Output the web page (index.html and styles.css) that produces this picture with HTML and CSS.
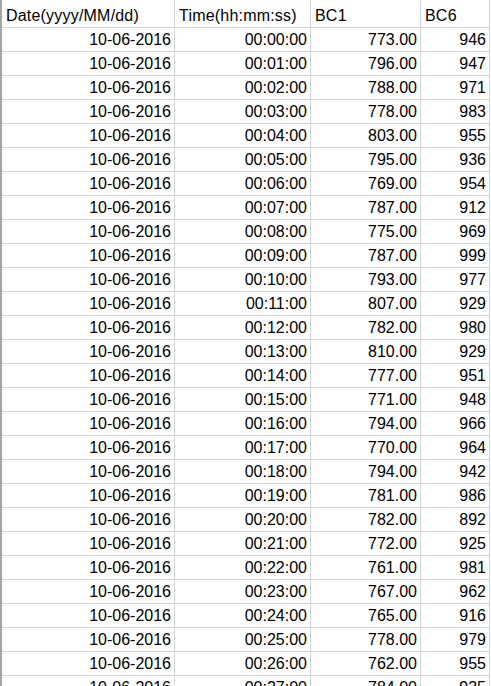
FILE: index.html
```html
<!DOCTYPE html>
<html>
<head>
<meta charset="utf-8">
<link rel="stylesheet" href="styles.css">
</head>
<body>
<div class="sheet">
<table class="grid">
<colgroup><col class="c1"><col class="c2"><col class="c3"><col class="c4"></colgroup>
<thead>
<tr class="head"><th>Date(yyyy/MM/dd)</th><th>Time(hh:mm:ss)</th><th>BC1</th><th>BC6</th></tr>
</thead>
<tbody>
<tr><td>10-06-2016</td><td>00:00:00</td><td>773.00</td><td>946</td></tr>
<tr><td>10-06-2016</td><td>00:01:00</td><td>796.00</td><td>947</td></tr>
<tr><td>10-06-2016</td><td>00:02:00</td><td>788.00</td><td>971</td></tr>
<tr><td>10-06-2016</td><td>00:03:00</td><td>778.00</td><td>983</td></tr>
<tr><td>10-06-2016</td><td>00:04:00</td><td>803.00</td><td>955</td></tr>
<tr><td>10-06-2016</td><td>00:05:00</td><td>795.00</td><td>936</td></tr>
<tr><td>10-06-2016</td><td>00:06:00</td><td>769.00</td><td>954</td></tr>
<tr><td>10-06-2016</td><td>00:07:00</td><td>787.00</td><td>912</td></tr>
<tr><td>10-06-2016</td><td>00:08:00</td><td>775.00</td><td>969</td></tr>
<tr><td>10-06-2016</td><td>00:09:00</td><td>787.00</td><td>999</td></tr>
<tr><td>10-06-2016</td><td>00:10:00</td><td>793.00</td><td>977</td></tr>
<tr><td>10-06-2016</td><td>00:11:00</td><td>807.00</td><td>929</td></tr>
<tr><td>10-06-2016</td><td>00:12:00</td><td>782.00</td><td>980</td></tr>
<tr><td>10-06-2016</td><td>00:13:00</td><td>810.00</td><td>929</td></tr>
<tr><td>10-06-2016</td><td>00:14:00</td><td>777.00</td><td>951</td></tr>
<tr><td>10-06-2016</td><td>00:15:00</td><td>771.00</td><td>948</td></tr>
<tr><td>10-06-2016</td><td>00:16:00</td><td>794.00</td><td>966</td></tr>
<tr><td>10-06-2016</td><td>00:17:00</td><td>770.00</td><td>964</td></tr>
<tr><td>10-06-2016</td><td>00:18:00</td><td>794.00</td><td>942</td></tr>
<tr><td>10-06-2016</td><td>00:19:00</td><td>781.00</td><td>986</td></tr>
<tr><td>10-06-2016</td><td>00:20:00</td><td>782.00</td><td>892</td></tr>
<tr><td>10-06-2016</td><td>00:21:00</td><td>772.00</td><td>925</td></tr>
<tr><td>10-06-2016</td><td>00:22:00</td><td>761.00</td><td>981</td></tr>
<tr><td>10-06-2016</td><td>00:23:00</td><td>767.00</td><td>962</td></tr>
<tr><td>10-06-2016</td><td>00:24:00</td><td>765.00</td><td>916</td></tr>
<tr><td>10-06-2016</td><td>00:25:00</td><td>778.00</td><td>979</td></tr>
<tr><td>10-06-2016</td><td>00:26:00</td><td>762.00</td><td>955</td></tr>
<tr><td>10-06-2016</td><td>00:27:00</td><td>784.00</td><td>935</td></tr>
<tr><td>10-06-2016</td><td>00:28:00</td><td>779.00</td><td>940</td></tr>
</tbody>
</table>
</div>
</body>
</html>
```
FILE: styles.css
```css
html, body {
  margin: 0;
  padding: 0;
  background: #ffffff;
  overflow: hidden;
  height: 686px;
}
.sheet {
  width: 488px;
  border-left: 2px solid #a5a5a5;
  height: 686px;
  overflow: hidden;
}
.grid {
  table-layout: fixed;
  border-collapse: separate;
  border-spacing: 0;
  width: 488px;
  font-family: "Liberation Sans", Arial, sans-serif;
  font-size: 16px;
  color: #000000;
}
.c1 { width: 173px; }
.c2 { width: 136px; }
.c3 { width: 110px; }
.c4 { width: 69px; }
.grid th,
.grid td {
  border-right: 1px solid #d4d4d4;
  border-bottom: 1px solid #d4d4d4;
  white-space: nowrap;
  overflow: hidden;
  box-sizing: border-box;
}
.grid td {
  height: 24px;
  text-align: right;
  vertical-align: top;
  padding: 1px 3px 0 3px;
  line-height: 22px;
}
.grid th {
  height: 28px;
  font-weight: normal;
  text-align: left;
  vertical-align: top;
  padding: 4px 3px 0 4px;
  line-height: 23px;
  letter-spacing: 0.2px;
}
```
